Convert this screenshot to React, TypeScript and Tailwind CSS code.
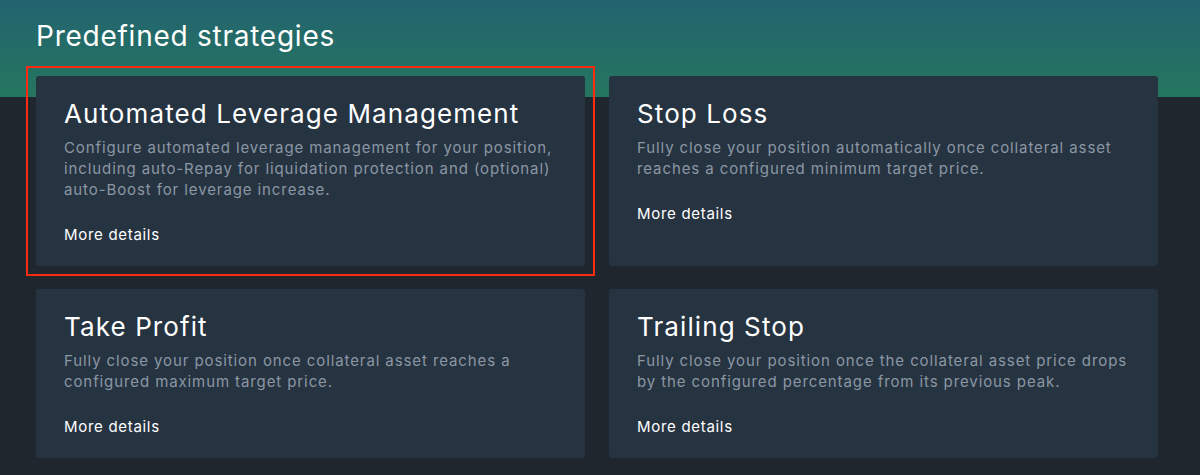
const strategies = [
  {
    title: 'Automated Leverage Management',
    lines: [
      'Configure automated leverage management for your position,',
      'including auto-Repay for liquidation protection and (optional)',
      'auto-Boost for leverage increase.',
    ],
    selected: true,
  },
  {
    title: 'Stop Loss',
    lines: [
      'Fully close your position automatically once collateral asset',
      'reaches a configured minimum target price.',
    ],
  },
  {
    title: 'Take Profit',
    lines: [
      'Fully close your position once collateral asset reaches a',
      'configured maximum target price.',
    ],
  },
  {
    title: 'Trailing Stop',
    lines: [
      'Fully close your position once the collateral asset price drops',
      'by the configured percentage from its previous peak.',
    ],
  },
];

export default function App() {
  return (
    <div
      className="min-h-[475px] bg-[linear-gradient(to_bottom,#23636f_0px,#25765f_97px,#1f262e_97px)] pl-9 pr-[42px] pt-[18px] pb-6 text-white"
      style={{ fontFamily: 'Inter, "Noto Sans", sans-serif' }}
    >
      <h1 className="mb-[22px] text-[28px] leading-9 font-normal tracking-[0.75px]">Predefined strategies</h1>
      <div className="grid grid-cols-2 gap-x-6 gap-y-[23px]">
        {strategies.map((s) => (
          // wrapper carries the square selection outline, card keeps its rounding
          <div key={s.title} className={s.selected ? 'outline-2 outline-[#ff2a12] outline-offset-[8px]' : ''}>
            <div className="h-full rounded-[3px] bg-[#263341] px-7 pt-[22px] pb-[21px]">
              <h2 className="text-[26px] leading-8 font-normal tracking-[1.1px]">{s.title}</h2>
              <p className="mt-[7px] whitespace-nowrap text-[15px] leading-[21px] text-[#8b97a4] tracking-[0.9px]">
                {s.lines.map((l, i) => (
                  <span key={i}>
                    {l}
                    {i < s.lines.length - 1 && <br />}
                  </span>
                ))}
              </p>
              <button className="mt-6 block text-[15px] leading-[21px] font-normal text-white tracking-[0.7px]">
                More details
              </button>
            </div>
          </div>
        ))}
      </div>
    </div>
  );
}
